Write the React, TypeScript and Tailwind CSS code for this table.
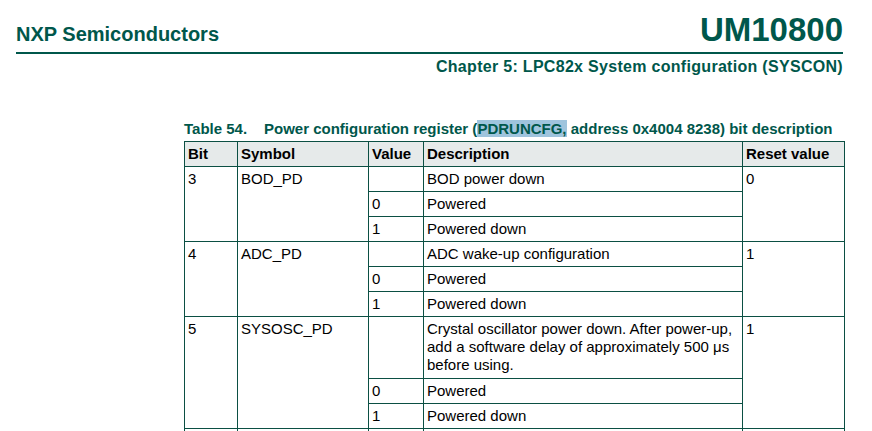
import React from "react";

const B = "border border-[#0b4f43]";
const cell = `${B} align-top pl-[3px] pr-[3px] pt-[3px] pb-0 leading-[18px]`;

type Sub = { v: string; d: React.ReactNode; h?: string };
type Group = { bit: string; sym: string; reset: string; rows: Sub[] };

const groups: Group[] = [
  {
    bit: "3",
    sym: "BOD_PD",
    reset: "0",
    rows: [
      { v: "", d: "BOD power down" },
      { v: "0", d: "Powered" },
      { v: "1", d: "Powered down" },
    ],
  },
  {
    bit: "4",
    sym: "ADC_PD",
    reset: "1",
    rows: [
      { v: "", d: "ADC wake-up configuration" },
      { v: "0", d: "Powered" },
      { v: "1", d: "Powered down" },
    ],
  },
  {
    bit: "5",
    sym: "SYSOSC_PD",
    reset: "1",
    rows: [
      {
        v: "",
        d: (
          <>
            Crystal oscillator power down. After power-up,
            <br />
            add a software delay of approximately 500 μs
            <br />
            before using.
          </>
        ),
        h: "h-[62px]",
      },
      { v: "0", d: "Powered" },
      { v: "1", d: "Powered down" },
    ],
  },
  {
    bit: "",
    sym: "",
    reset: "",
    rows: [
      { v: "", d: "" },
      { v: "", d: "" },
      { v: "", d: "" },
    ],
  },
];

export default function App() {
  return (
    <div
      className="w-[872px] h-[431px] overflow-hidden bg-white text-black"
      style={{ fontFamily: '"Liberation Sans", Arial, sans-serif' }}
    >
      <div className="ml-[16px] w-[827px] pt-[13px]">
        <div className="flex items-baseline justify-between leading-none text-[#00574b] font-bold">
          <span className="text-[20px]">NXP Semiconductors</span>
          <span className="text-[33px]">UM10800</span>
        </div>
        <div className="mt-[6px] h-[2px] bg-[#00574b]" />
        <div className="mt-[4px] text-right text-[16px] tracking-[0.3px] leading-[18px] font-bold text-[#00574b]">
          Chapter 5: LPC82x System configuration (SYSCON)
        </div>
      </div>

      <div className="ml-[184px] mt-[41px]">
        <div className="text-[15px] leading-[24px] font-bold text-[#00574b] whitespace-nowrap">
          <span className="inline-block w-[80px]">Table 54.</span>
          Power configuration register (
          <span className="bg-[#9fc4dd]">PDRUNCFG,</span> address 0x4004 8238)
          bit description
        </div>
        <table className="w-[660px] table-fixed border-collapse text-[15px]">
          <colgroup>
            <col className="w-[53px]" />
            <col className="w-[131px]" />
            <col className="w-[55px]" />
            <col className="w-[319px]" />
            <col className="w-[102px]" />
          </colgroup>
          <thead>
            <tr className="h-[25px] bg-[#e6eaea] font-bold text-left">
              <th className={`${cell} font-bold`}>Bit</th>
              <th className={`${cell} font-bold`}>Symbol</th>
              <th className={`${cell} font-bold`}>Value</th>
              <th className={`${cell} font-bold`}>Description</th>
              <th className={`${cell} font-bold`}>Reset value</th>
            </tr>
          </thead>
          <tbody>
            {groups.map((g, gi) =>
              g.rows.map((r, i) => (
                <tr key={gi + "-" + i} className={r.h ?? "h-[25px]"}>
                  {i === 0 && (
                    <>
                      <td rowSpan={3} className={cell}>
                        {g.bit}
                      </td>
                      <td rowSpan={3} className={cell}>
                        {g.sym}
                      </td>
                    </>
                  )}
                  <td className={cell}>{r.v}</td>
                  <td className={cell}>{r.d}</td>
                  {i === 0 && (
                    <td rowSpan={3} className={cell}>
                      {g.reset}
                    </td>
                  )}
                </tr>
              ))
            )}
          </tbody>
        </table>
      </div>
    </div>
  );
}
